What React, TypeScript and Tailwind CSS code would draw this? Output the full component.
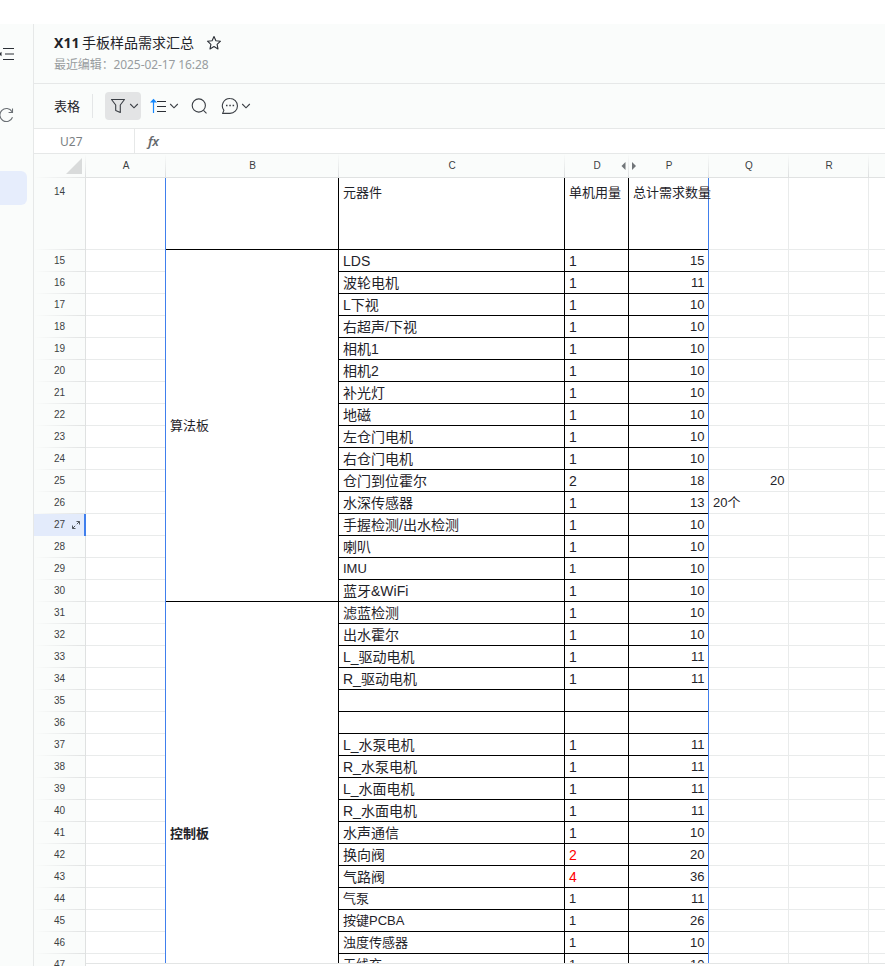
import React from "react";

type Row = { n: number; c: string; d: string; p: string; small?: boolean; red?: boolean };

const rows: Row[] = [
  { n: 15, c: "LDS", d: "1", p: "15" },
  { n: 16, c: "波轮电机", d: "1", p: "11" },
  { n: 17, c: "L下视", d: "1", p: "10" },
  { n: 18, c: "右超声/下视", d: "1", p: "10" },
  { n: 19, c: "相机1", d: "1", p: "10" },
  { n: 20, c: "相机2", d: "1", p: "10" },
  { n: 21, c: "补光灯", d: "1", p: "10" },
  { n: 22, c: "地磁", d: "1", p: "10" },
  { n: 23, c: "左仓门电机", d: "1", p: "10" },
  { n: 24, c: "右仓门电机", d: "1", p: "10" },
  { n: 25, c: "仓门到位霍尔", d: "2", p: "18" },
  { n: 26, c: "水深传感器", d: "1", p: "13" },
  { n: 27, c: "手握检测/出水检测", d: "1", p: "10" },
  { n: 28, c: "喇叭", d: "1", p: "10" },
  { n: 29, c: "IMU", d: "1", p: "10", small: true },
  { n: 30, c: "蓝牙&WiFi", d: "1", p: "10" },
  { n: 31, c: "滤蓝检测", d: "1", p: "10" },
  { n: 32, c: "出水霍尔", d: "1", p: "10" },
  { n: 33, c: "L_驱动电机", d: "1", p: "11" },
  { n: 34, c: "R_驱动电机", d: "1", p: "11" },
  { n: 35, c: "", d: "", p: "" },
  { n: 36, c: "", d: "", p: "" },
  { n: 37, c: "L_水泵电机", d: "1", p: "11" },
  { n: 38, c: "R_水泵电机", d: "1", p: "11" },
  { n: 39, c: "L_水面电机", d: "1", p: "11" },
  { n: 40, c: "R_水面电机", d: "1", p: "11" },
  { n: 41, c: "水声通信", d: "1", p: "10" },
  { n: 42, c: "换向阀", d: "2", p: "20", red: true },
  { n: 43, c: "气路阀", d: "4", p: "36", red: true },
  { n: 44, c: "气泵", d: "1", p: "11", small: true },
  { n: 45, c: "按键PCBA", d: "1", p: "26", small: true },
  { n: 46, c: "浊度传感器", d: "1", p: "10", small: true },
  { n: 47, c: "无线充", d: "1", p: "10", small: true },
];

const sheetFont = "font-['Liberation_Sans','Noto_Sans_CJK_SC',sans-serif]";

function ColumnHead({ label, children }: { label: string; children?: React.ReactNode }) {
  return (
    <div className="relative flex h-6 shrink-0 items-center justify-center border-b border-[#e0e2e2] bg-[#fafcfb] text-[10px] text-[#3c3f43]">
      {label}
      <span className="absolute right-0 top-0 h-6 w-px bg-linear-to-b from-[#fafcfb] to-[#dcdedf]" />
      {children}
    </div>
  );
}

function Column({ label, width, line, head, children }: { label: string; width: string; line: string; head?: React.ReactNode; children: React.ReactNode }) {
  return (
    <div className={`flex shrink-0 flex-col ${width}`}>
      <ColumnHead label={label}>{head}</ColumnHead>
      <div className={`flex h-[785px] flex-col border-r ${line}`}>{children}</div>
    </div>
  );
}

function EmptyCells({ values = {} }: { values?: Record<number, React.ReactNode> }) {
  return (
    <>
      <div className="h-[72px] shrink-0 border-b border-[#e9ebeb]" />
      {rows.map((r) => (
        <div key={r.n} className="flex h-[22px] shrink-0 items-center border-b border-[#e9ebeb] pl-1 pr-[3.5px] text-[13px] text-[#1f2329]">
          {values[r.n]}
        </div>
      ))}
    </>
  );
}

function FadeLine() {
  return <span className="absolute bottom-0 left-0 h-px w-full bg-linear-to-r from-[#fafcfb] to-[#e1e3e3]" />;
}

function Chevron() {
  return (
    <svg className="h-2 w-2.5" viewBox="0 0 10 8" fill="none" stroke="#3a3e44" strokeWidth="1.1">
      <path d="M1.2 2l3.8 3.8L8.8 2" />
    </svg>
  );
}

export default function App() {
  return (
    <div className={`flex h-[966px] w-[885px] flex-col overflow-hidden bg-white pt-6 text-[#1f2329] ${sheetFont}`}>
      <div className="flex min-h-0 flex-1">
        <aside className="flex w-[34px] shrink-0 flex-col border-r border-[#e6e8e8] bg-[#fafcfb]">
          <svg className="mt-[22px] h-4 w-[15px]" viewBox="0 0 15 16" fill="none" stroke="#2b2f36" strokeWidth="1.2">
            <path d="M3 2.500h11M5 8h9M3 13.500h11" />
            <path d="M1.500 5.800v4.400L-1 8z" fill="#2b2f36" stroke="none" />
          </svg>
          <svg className="mt-[45px] h-4 w-[14px]" viewBox="0 0 14 16" fill="none" stroke="#6b7075" strokeWidth="1.1">
            <path d="M12.500 10.200A6.500 6.500 0 1 1 12 4.700M12.500 1.500v4H8.600" />
          </svg>
          <div className="mt-12 h-[34px] w-[27px] rounded-r-md bg-[#e6edfc]" />
        </aside>

        <main className="flex min-w-0 flex-1 flex-col">
          <header className="h-[60px] shrink-0 border-b border-[#e6e8e8] bg-[#fafcfb] pl-5 pt-2 font-['Noto_Sans','Noto_Sans_CJK_SC',sans-serif]">
            <div className="flex h-[22px] items-center text-[14px]">
              <span className="-mt-0.5 whitespace-pre"><b className="font-bold">X11</b><span className="-ml-px"> 手板样品需求汇总</span></span>
              <svg className="ml-3 h-4 w-4" viewBox="0 0 16 16" fill="none" stroke="#2b2f36" strokeWidth="1.1" strokeLinejoin="round">
                <path d="M8 1.500l1.900 4.200 4.600.500-3.400 3.100.900 4.600L8 11.600 4 13.900l.900-4.600L1.500 6.200l4.600-.500z" />
              </svg>
            </div>
            <div className="h-5 pt-px text-[12px] leading-5 tracking-[-0.09px] text-[#989c9f]">最近编辑：2025-02-17 16:28</div>
          </header>

          <div className="flex h-[45px] shrink-0 items-center border-b border-[#e6e8e8] bg-[#fafcfb] pl-5">
            <span className="w-[26px] pt-0.5 text-[13px]">表格</span>
            <span className="ml-3 h-6 w-px bg-[#e4e6e7]" />
            <div className="ml-3 flex h-7 w-9 items-center rounded bg-[#e3e4e5] pl-[5px]">
              <svg className="h-4 w-4" viewBox="0 0 16 16" fill="none" stroke="#3a3e44" strokeWidth="1.1" strokeLinejoin="round">
                <path d="M1.500 1.500h13l-4.200 5.500v7.500L5.700 12.500V7z" />
              </svg>
              <span className="ml-[3px] flex"><Chevron /></span>
            </div>
            <svg className="ml-[9px] h-4 w-4" viewBox="0 0 16 16" fill="none">
              <path d="M3.500 15V3" stroke="#1488ff" strokeWidth="1.200" />
              <path d="M0 4.500h7L3.500.800z" fill="#1488ff" />
              <path d="M7 3.500h9M7 8.500h9M7 13.500h9" stroke="#2b2f36" />
            </svg>
            <span className="ml-[3px] flex"><Chevron /></span>
            <svg className="ml-[12px] h-4 w-4" viewBox="0 0 16 16" fill="none" stroke="#3a3e44" strokeWidth="1.1">
              <circle cx="7.800" cy="7.500" r="6.600" />
              <path d="M12.500 12.300l3 3" />
            </svg>
            <svg className="ml-[14px] h-[18px] w-[18px]" viewBox="0 0 18 18" fill="none" stroke="#3a3e44" strokeWidth="1.100" strokeLinejoin="round">
              <path d="M9 1.500a7.400 7.400 0 1 1 0 14.900H1.600l1.300-3A7.400 7.400 0 0 1 9 1.500z" />
              <path d="M5 8.500h1.500M8.300 8.500h1.500M11.600 8.500h1.500" strokeWidth="1.500" />
            </svg>
            <span className="ml-[2px] flex"><Chevron /></span>
          </div>

          <div className="flex h-[24px] shrink-0 items-center bg-white">
            <div className="flex h-full w-[101px] items-center border-r border-[#e6e8e8] pl-[26px] pt-px font-['Noto_Sans',sans-serif] text-[12px] text-[#7b7f83]">U27</div>
            <span className="ml-[13px] font-['Noto_Sans',sans-serif] text-[13px] font-semibold italic leading-none tracking-[-0.3px] text-[#666a6e]">fx</span>
          </div>

          <div className="flex min-h-0 flex-1 border-t border-[#e6e8e8]">
            <div className="flex w-[52px] shrink-0 flex-col bg-[#fafcfb] text-[10px] text-[#3c3f43]">
              <div className="relative flex h-6 shrink-0 justify-end pr-1 pt-1">
                <svg className="h-4 w-4" viewBox="0 0 16 16" fill="#d9dbdb"><path d="M16 0v16H0z" /></svg>
                <span className="absolute right-0 top-0 h-6 w-px bg-linear-to-b from-[#fafcfb] to-[#dcdedf]" />
                <FadeLine />
              </div>
              <div className="relative flex min-h-0 flex-1 flex-col border-r border-[#dfe1e1]">
                <div className="relative flex h-[72px] shrink-0">
                  <span className="w-[52px] pt-1.5 text-center">14</span>
                  <FadeLine />
                </div>
                {rows.map((r) => (
                  <div key={r.n} className="relative flex h-[22px] shrink-0 items-center pb-px">
                    {r.n !== 27 && <FadeLine />}
                    {r.n === 27 && <span className="absolute left-0 top-0 h-[22px] w-[52px] border-r-2 border-[#407fed] bg-[#e3ebfb]" />}
                    <span className="relative w-[52px] text-center">{r.n}</span>
                    {r.n === 27 && (
                      <svg className="absolute left-[38px] top-[7px] h-2 w-2" viewBox="0 0 8 8" fill="none" stroke="#4f555b" strokeWidth="1">
                        <path d="M4.500.500h3v3M7.500.500L4.800 3.200M.500 4.500v3h3M.500 7.500l2.700-2.700" />
                      </svg>
                    )}
                  </div>
                ))}
              </div>
            </div>

            <div className="flex h-[810px] min-w-0 flex-1 overflow-hidden border-b border-[#e3e5e5]">
              <Column label="A" width="w-[80px]" line="border-[#407fed]"><EmptyCells /></Column>

              <Column label="B" width="w-[173px]" line="border-black">
                <div className="h-[72px] shrink-0 border-b border-black" />
                <div className="flex h-[352px] shrink-0 items-center border-b border-black pl-1 text-[13px]">算法板</div>
                <div className="flex h-[464px] shrink-0 items-center pl-1 text-[13px] font-bold">控制板</div>
              </Column>

              <Column label="C" width="w-[226px]" line="border-black">
                <div className="h-[72px] shrink-0 border-b border-black pl-1 pt-[5px] text-[13px] leading-5">元器件</div>
                {rows.map((r) => (
                  <div key={r.n} className={`h-[22px] shrink-0 border-b border-black pl-1 leading-[22px] ${r.small ? "text-[13px]" : "text-[14px]"}`}>{r.c}</div>
                ))}
              </Column>

              <Column
                label="D"
                width="w-[64px]"
                line="border-black"
                head={
                  <svg className="absolute -right-[8px] top-2 z-10 h-2 w-4" viewBox="0 0 16 8" fill="#717579">
                    <path d="M4.500 0v8L.500 4zM11 0v8l4-4z" />
                  </svg>
                }
              >
                <div className="h-[72px] shrink-0 whitespace-nowrap border-b border-black pl-1 pt-[5px] text-[13px] leading-5">单机用量</div>
                {rows.map((r) => (
                  <div key={r.n} className={`h-[22px] shrink-0 border-b border-black pl-1 leading-[22px] ${r.small ? "text-[13px]" : "text-[14px]"} ${r.red ? "text-[#ff0000]" : ""}`}>{r.d}</div>
                ))}
              </Column>

              <Column label="P" width="w-[80px]" line="border-[#407fed]">
                <div className="h-[72px] shrink-0 whitespace-nowrap border-b border-black pl-1 pt-[5px] text-[13px] leading-5">总计需求数量</div>
                {rows.map((r) => (
                  <div key={r.n} className="h-[22px] shrink-0 border-b border-black pr-[3.5px] text-right text-[13px] leading-[22px]">{r.p}</div>
                ))}
              </Column>

              <Column label="Q" width="w-[80px]" line="border-[#e9ebeb]">
                <EmptyCells values={{ 25: <span className="ml-auto">20</span>, 26: <span>20个</span> }} />
              </Column>
              <Column label="R" width="w-[80px]" line="border-[#e9ebeb]"><EmptyCells /></Column>
              <Column label="" width="w-[80px]" line="border-[#e9ebeb]"><EmptyCells /></Column>
            </div>
          </div>
        </main>
      </div>
    </div>
  );
}
